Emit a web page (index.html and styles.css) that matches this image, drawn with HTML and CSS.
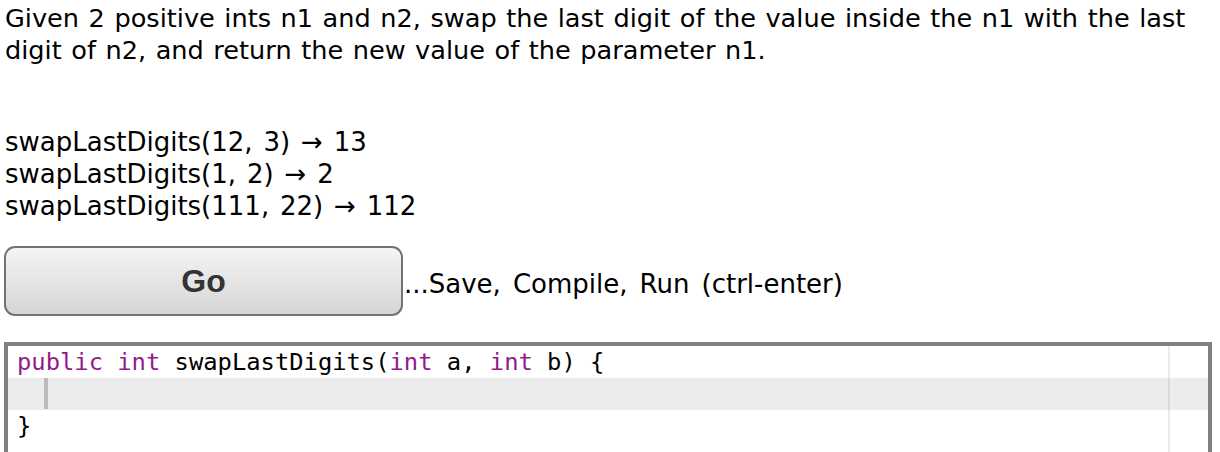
FILE: index.html
```html
<!DOCTYPE html>
<html>
<head>
<meta charset="utf-8">
<link rel="stylesheet" href="styles.css">
</head>
<body>
<div class="page">
  <p class="desc">Given 2 positive ints n1 and n2, swap the last digit of the value inside the n1 with the last digit of n2, and return the new value of the parameter n1.</p>
  <div class="examples">
    <div>swapLastDigits(12, 3) → 13</div>
    <div>swapLastDigits(1, 2) → 2</div>
    <div>swapLastDigits(111, 22) → 112</div>
  </div>
  <div class="run-row">
    <button class="go">Go</button>
    <span class="hint">...Save, Compile, Run (ctrl-enter)</span>
  </div>
  <div class="editor">
    <div class="margin-line"></div>
    <div class="line"><span class="kw">public</span> <span class="kw">int</span> swapLastDigits(<span class="kw">int</span> a, <span class="kw">int</span> b) {</div>
    <div class="line active"><span class="indent"></span></div>
    <div class="line">}</div>
  </div>
</div>
</body>
</html>
```

FILE: styles.css
```css
html, body {
  margin: 0;
  padding: 0;
  background: #fff;
}
.page {
  padding: 2px 0 0 5px;
  font-family: "DejaVu Sans", Verdana, sans-serif;
  font-size: 26px;
  word-spacing: 2.6px;
  color: #000;
}
.desc {
  margin: 0;
  line-height: 32px;
  width: 1215px;
  font-size: 25.6px;
  word-spacing: 1.4px;
}
.examples {
  margin-top: 60px;
  line-height: 32px;
}
.run-row {
  display: flex;
  align-items: center;
  margin-top: 24px;
  margin-left: -1px;
}
.go {
  width: 399px;
  height: 70px;
  border: 2px solid #737373;
  border-radius: 11px;
  background: linear-gradient(#f4f4f4, #d6d6d6);
  font-family: "Liberation Sans", Arial, sans-serif;
  font-weight: bold;
  font-size: 32px;
  word-spacing: 0;
  color: #333;
  padding: 0;
}
.hint {
  margin-left: 1px;
  margin-top: 5px;
  word-spacing: 3.8px;
}
.editor {
  position: relative;
  margin: 26px 8px 0 -1px;
  border: 4px solid #808080;
  border-bottom: none;
  height: 106px;
  font-family: "DejaVu Sans Mono", Menlo, monospace;
  font-size: 23.8px;
  word-spacing: 0;
  overflow: hidden;
}
.line {
  height: 32px;
  line-height: 32px;
  padding-left: 9px;
  white-space: pre;
  position: relative;
}
.line.active {
  background: #ececec;
}
.kw {
  color: #921a8c;
}
.indent {
  position: absolute;
  left: 36px;
  top: 0;
  width: 4px;
  height: 31px;
  background: #bbbbbb;
}
.margin-line {
  position: absolute;
  top: 0;
  bottom: 0;
  left: 1160px;
  width: 2px;
  background: rgba(0,0,0,0.08);
  z-index: 1;
}
```
